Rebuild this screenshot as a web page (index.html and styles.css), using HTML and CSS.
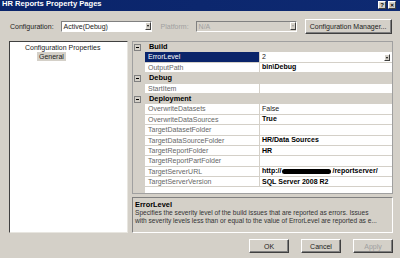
FILE: index.html
```html
<!DOCTYPE html>
<html lang="en">
<head>
    <meta charset="UTF-8">
    <title>HR Reports Property Pages</title>
    <link rel="stylesheet" href="styles.css">
</head>
<body>
    <div class="window">
        <div class="titlebar">
            <span class="title">HR Reports Property Pages</span>
            <span class="tb-btn">?</span>
            <span class="tb-btn close">&#x2715;</span>
        </div>

        <div class="config-row">
            <span class="label">Configuration:</span>
            <div class="combo cfg">
                <span class="combo-text">Active(Debug)</span>
                <span class="drop"></span>
            </div>
            <span class="label disabled platform-label">Platform:</span>
            <div class="combo platform off">
                <span class="combo-text">N/A</span>
                <span class="drop"></span>
            </div>
            <button class="btn cfg-mgr">Configuration Manager...</button>
        </div>

        <div class="main">
            <div class="tree">
                <div class="tree-root">Configuration Properties</div>
                <div class="tree-child"><span class="tree-sel">General</span></div>
            </div>

            <div class="right">
                <div class="grid">
                    <div class="row cat"><span class="gutter"><span class="minus"></span></span><span class="cat-name">Build</span></div>
                    <div class="row selected"><span class="gutter"></span><span class="name">ErrorLevel</span><span class="value">2<span class="drop small"></span></span></div>
                    <div class="row"><span class="gutter"></span><span class="name">OutputPath</span><span class="value bold">bin\Debug</span></div>
                    <div class="row cat"><span class="gutter"><span class="minus"></span></span><span class="cat-name">Debug</span></div>
                    <div class="row"><span class="gutter"></span><span class="name">StartItem</span><span class="value"></span></div>
                    <div class="row cat"><span class="gutter"><span class="minus"></span></span><span class="cat-name">Deployment</span></div>
                    <div class="row"><span class="gutter"></span><span class="name">OverwriteDatasets</span><span class="value">False</span></div>
                    <div class="row"><span class="gutter"></span><span class="name">OverwriteDataSources</span><span class="value bold">True</span></div>
                    <div class="row"><span class="gutter"></span><span class="name">TargetDatasetFolder</span><span class="value"></span></div>
                    <div class="row"><span class="gutter"></span><span class="name">TargetDataSourceFolder</span><span class="value bold">HR/Data Sources</span></div>
                    <div class="row"><span class="gutter"></span><span class="name">TargetReportFolder</span><span class="value bold">HR</span></div>
                    <div class="row"><span class="gutter"></span><span class="name">TargetReportPartFolder</span><span class="value"></span></div>
                    <div class="row"><span class="gutter"></span><span class="name">TargetServerURL</span><span class="value bold">http://<span class="redact"></span>/reportserver/</span></div>
                    <div class="row"><span class="gutter"></span><span class="name">TargetServerVersion</span><span class="value bold">SQL Server 2008 R2</span></div>
                    <div class="grid-fill"><span class="gutter"></span></div>
                </div>

                <div class="desc">
                    <div class="desc-title">ErrorLevel</div>
                    <div class="desc-text">Specifies the severity level of the build issues that are reported as errors. Issues<br>with severity levels less than or equal to the value of ErrorLevel are reported as e...</div>
                </div>
            </div>
        </div>

        <div class="footer">
            <button class="btn">OK</button>
            <button class="btn">Cancel</button>
            <button class="btn" disabled>Apply</button>
        </div>
    </div>
</body>
</html>
```

FILE: styles.css
```css
body {
    margin: 0;
    background-color: #d4d0c8;
    font-family: "Liberation Sans", Arial, sans-serif;
    font-size: 7px;
    color: #222;
}
.window {
    width: 400px;
    height: 258px;
    overflow: hidden;
}

/* title bar */
.titlebar {
    height: 11px;
    background: linear-gradient(to right, #0a246a, #0e2a72);
    display: flex;
    align-items: center;
    padding-left: 2px;
    padding-right: 4px;
}
.title {
    flex: 1;
    color: #fff;
    font-weight: bold;
    font-size: 7.6px;
    margin-top: -4px;
}
.tb-btn {
    width: 8px;
    height: 8px;
    margin-top: -2px;
    margin-left: 1px;
    background-color: #d4d0c8;
    border: 1px solid;
    border-color: #fff #404040 #404040 #fff;
    box-sizing: border-box;
    font-size: 6px;
    font-weight: bold;
    line-height: 6px;
    text-align: center;
    color: #000;
}
.tb-btn.close {
    margin-left: 2px;
    font-size: 5px;
}

/* configuration row */
.config-row {
    height: 30px;
    display: flex;
    align-items: center;
    padding-left: 10px;
}
.label {
    margin-right: 7px;
}
.disabled {
    color: #a0a0a0;
}
.platform-label {
    margin-left: 9px;
}
.combo {
    height: 11px;
    box-sizing: border-box;
    border: 1px solid;
    border-color: #808080 #fff #fff #808080;
    background-color: #fff;
    display: flex;
    align-items: center;
    padding-left: 2px;
}
.combo.cfg {
    width: 91px;
}
.combo.platform {
    width: 101px;
    margin-right: 8px;
}
.combo.off {
    background-color: #d4d0c8;
    color: #a0a0a0;
}
.combo-text {
    flex: 1;
}
.drop {
    width: 6px;
    height: 8px;
    box-sizing: border-box;
    background-color: #d4d0c8;
    border: 1px solid;
    border-color: #fff #404040 #404040 #fff;
    position: relative;
}
.drop::after {
    content: "";
    position: absolute;
    left: 1px;
    top: 2px;
    border-left: 1.5px solid transparent;
    border-right: 1.5px solid transparent;
    border-top: 2px solid #000;
}
.off .drop::after {
    border-top-color: #a0a0a0;
}
.btn {
    font-family: "Liberation Sans", Arial, sans-serif;
    font-size: 7px;
    color: #222;
    background-color: #d4d0c8;
    border: 1px solid;
    border-color: #fff #404040 #404040 #fff;
    box-shadow: inset -1px -1px 0 #808080;
    padding: 0;
    height: 14px;
}
.btn:disabled {
    color: #a0a0a0;
}
.cfg-mgr {
    width: 87px;
    height: 15px;
    margin-top: 1px;
}

/* main area */
.main {
    display: flex;
    height: 192px;
    padding-left: 9px;
}
.tree {
    width: 119px;
    background-color: #fff;
    box-sizing: border-box;
    border: 1px solid;
    border-color: #404040 #e8e6e0 #e8e6e0 #404040;
    margin-right: 4px;
    padding-top: 2px;
}
.tree-root {
    padding-left: 15px;
    height: 8px;
    line-height: 8px;
}
.tree-child {
    padding-left: 27px;
    height: 9px;
    line-height: 9px;
}
.tree-sel {
    background-color: #d4d0c8;
    padding: 1px 2px;
}
.right {
    width: 261px;
    display: flex;
    flex-direction: column;
}

/* property grid */
.grid {
    height: 153px;
    box-sizing: border-box;
    border: 1px solid #a0a0a0;
    background-color: #fff;
    display: flex;
    flex-direction: column;
}
.row {
    height: 10.4px;
    flex-shrink: 0;
    display: flex;
    line-height: 10px;
}
.gutter {
    width: 12px;
    flex-shrink: 0;
    background-color: #d4d0c8;
    display: flex;
    align-items: center;
    padding-left: 1px;
    box-sizing: border-box;
}
.minus {
    width: 7px;
    height: 7px;
    box-sizing: border-box;
    border: 1px solid #808080;
    position: relative;
}
.minus::after {
    content: "";
    position: absolute;
    left: 1px;
    top: 2px;
    width: 3px;
    height: 1px;
    background-color: #000;
}
.cat {
    background-color: #d4d0c8;
}
.cat-name {
    font-weight: bold;
    padding-left: 4px;
    font-size: 7.4px;
    color: #000;
}
.name {
    width: 115px;
    flex-shrink: 0;
    box-sizing: border-box;
    padding-left: 3px;
    color: #666;
    border-right: 1px solid #d4d0c8;
    border-bottom: 1px solid #d4d0c8;
}
.value {
    flex: 1;
    padding-left: 2px;
    color: #222;
    border-bottom: 1px solid #d4d0c8;
    display: flex;
    align-items: center;
}
.value.bold {
    font-weight: bold;
    color: #000;
}
.selected .name {
    background-color: #0a246a;
    color: #fff;
}
.selected .value {
    justify-content: space-between;
    padding-right: 2px;
}
.drop.small {
    height: 7px;
}
.redact {
    display: inline-block;
    width: 49px;
    height: 5px;
    border-radius: 3px;
    background-color: #000;
    margin: 0 1px;
}
.grid-fill {
    flex: 1;
    display: flex;
}

/* description */
.desc {
    margin-top: 3px;
    height: 36px;
    box-sizing: border-box;
    border: 1px solid;
    border-color: #808080 #fff #fff #808080;
    padding: 2px 2px 0 2px;
}
.desc-title {
    font-weight: bold;
    color: #000;
    font-size: 7.4px;
    height: 9px;
}
.desc-text {
    line-height: 8px;
    font-size: 6.6px;
    color: #333;
}

/* bottom buttons */
.footer {
    display: flex;
    justify-content: flex-end;
    gap: 12px;
    padding-top: 6px;
    padding-right: 7px;
}
.footer .btn {
    width: 40px;
}
```
